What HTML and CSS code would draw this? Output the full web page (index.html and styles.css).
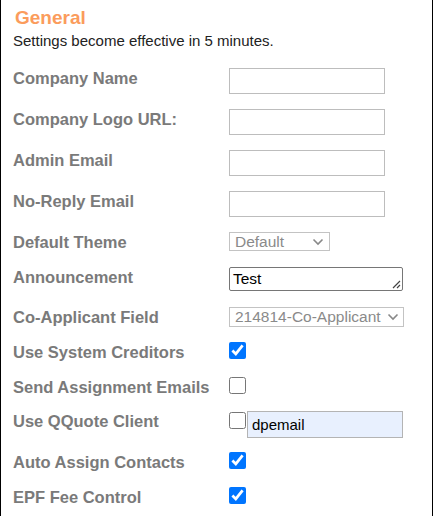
FILE: index.html
```html
<!DOCTYPE html>
<html lang="en">
<head>
    <meta charset="UTF-8">
    <meta name="viewport" content="width=device-width, initial-scale=1.0">
    <title>General Settings</title>
    <link rel="stylesheet" href="styles.css">
</head>
<body>

    <div class="settings-box">
        <h2 class="section-title">General</h2>
        <p class="section-note">Settings become effective in 5 minutes.</p>

        <div class="setting-row">
            <label class="setting-label">Company Name</label>
            <input type="text" class="text-field" />
        </div>
        <div class="setting-row">
            <label class="setting-label">Company Logo URL:</label>
            <input type="text" class="text-field" />
        </div>
        <div class="setting-row">
            <label class="setting-label">Admin Email</label>
            <input type="text" class="text-field" />
        </div>
        <div class="setting-row">
            <label class="setting-label">No-Reply Email</label>
            <input type="text" class="text-field" />
        </div>
        <div class="setting-row row-select">
            <label class="setting-label">Default Theme</label>
            <div class="select-box theme-select">
                <span>Default</span>
                <svg width="12" height="8" viewBox="0 0 12 8"><path d="M1.5 1.5 L6 6 L10.5 1.5" fill="none" stroke="#888" stroke-width="1.6"/></svg>
            </div>
        </div>
        <div class="setting-row">
            <label class="setting-label">Announcement</label>
            <div class="textarea-box">
                <span>Test</span>
                <svg class="grip" width="10" height="10" viewBox="0 0 10 10"><path d="M9 2 L2 9 M9 6 L6 9" stroke="#444" stroke-width="1.2"/></svg>
            </div>
        </div>
        <div class="setting-row row-select">
            <label class="setting-label">Co-Applicant Field</label>
            <div class="select-box coapp-select">
                <span>214814-Co-Applicant</span>
                <svg width="12" height="8" viewBox="0 0 12 8"><path d="M1.5 1.5 L6 6 L10.5 1.5" fill="none" stroke="#888" stroke-width="1.6"/></svg>
            </div>
        </div>
        <div class="setting-row row-check">
            <label class="setting-label">Use System Creditors</label>
            <input type="checkbox" class="check" checked />
        </div>
        <div class="setting-row row-check">
            <label class="setting-label">Send Assignment Emails</label>
            <input type="checkbox" class="check" />
        </div>
        <div class="setting-row row-qquote">
            <label class="setting-label">Use QQuote Client</label>
            <input type="checkbox" class="check" />
            <input type="text" class="text-field filled" value="dpemail" />
        </div>
        <div class="setting-row row-check">
            <label class="setting-label">Auto Assign Contacts</label>
            <input type="checkbox" class="check" checked />
        </div>
        <div class="setting-row row-check">
            <label class="setting-label">EPF Fee Control</label>
            <input type="checkbox" class="check" checked />
        </div>
    </div>

</body>
</html>
```

FILE: styles.css
```css
body {
    margin: 0;
    font-family: Arial, "Liberation Sans", sans-serif;
    background-color: white;
}
.settings-box {
    width: 431px;
    height: 514px;
    border-left: 1px solid #000;
    border-right: 1px solid #000;
    border-bottom: 1px solid #000;
    overflow: hidden;
    padding-top: 7px;
    box-sizing: content-box;
}
.section-title {
    margin: 0;
    margin-left: 14px;
    font-size: 19px;
    line-height: 22px;
    color: #fb9c5c;
}
.section-note {
    margin: 3px 0 0 12px;
    font-size: 15px;
    line-height: 17px;
    color: #222;
}
.setting-row {
    display: flex;
    align-items: flex-start;
    margin-bottom: 15px;
}
.section-note + .setting-row {
    margin-top: 19px;
}
.setting-label {
    width: 228px;
    padding-left: 12px;
    padding-top: 1px;
    box-sizing: border-box;
    font-size: 16.5px;
    font-weight: bold;
    line-height: 19px;
    color: #7a7a7a;
}
.text-field {
    margin: 0;
    width: 156px;
    height: 26px;
    box-sizing: border-box;
    border: 1px solid #bdbdbd;
    padding: 0 4px;
    font-family: Arial, "Liberation Sans", sans-serif;
    font-size: 15px;
    outline: none;
}
.row-select {
    margin-top: 1px;
}
.select-box {
    height: 20px;
    box-sizing: border-box;
    border: 1px solid #c3c3c3;
    display: flex;
    align-items: center;
    justify-content: space-between;
    padding: 0 5px 0 5px;
    font-size: 15.5px;
    color: #8a8a8a;
}
.theme-select {
    width: 101px;
    height: 19px;
}
.coapp-select {
    width: 175px;
    padding-right: 4px;
}
.textarea-box {
    position: relative;
    width: 174px;
    height: 24px;
    box-sizing: border-box;
    border: 1px solid #767676;
    border-radius: 2px;
    padding: 1px 3px;
    font-size: 15.5px;
    line-height: 19px;
    color: #000;
    margin-bottom: 1px;
}
.grip {
    position: absolute;
    right: 1px;
    bottom: 1px;
}
.row-check {
    height: 20px;
}
.check {
    margin: 0;
    width: 17px;
    height: 17px;
    accent-color: #0075ff;
}
.row-qquote {
    height: 27px;
    margin-top: -1px;
    margin-bottom: 14px;
}
.row-qquote .check {
    margin-top: 1px;
}
.filled {
    width: 156px;
    height: 27px;
    margin-left: 1px;
    background-color: #e8f0fe;
    border-color: #b4b4b4;
    color: #000;
}
```
